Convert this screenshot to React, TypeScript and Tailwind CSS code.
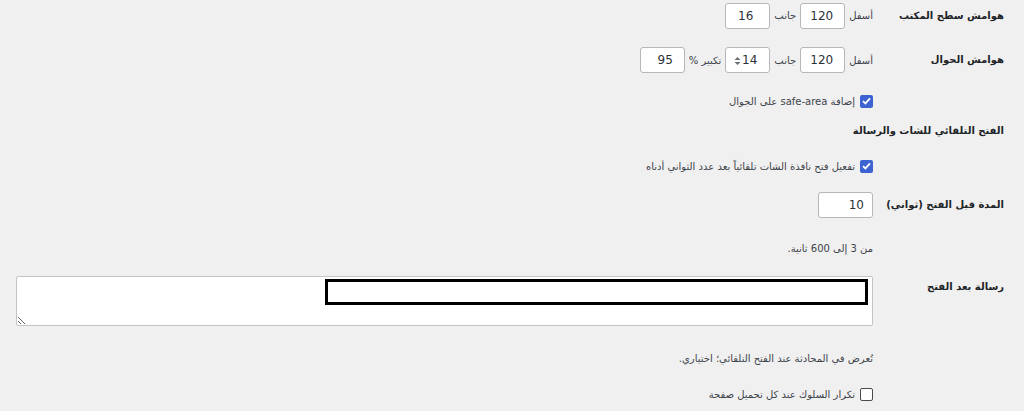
import type { ReactNode } from "react";

const fontStack = { fontFamily: '"Segoe UI", Tahoma, "DejaVu Sans", "Noto Sans", sans-serif' };

const Label = ({ children }: { children?: ReactNode }) => (
  <div className="w-[131px] shrink-0 whitespace-nowrap text-[10px] font-bold text-[#1d2327] leading-5">
    {children}
  </div>
);

const NumBox = ({
  value,
  width = "w-[45px]",
  pad = "pr-[11px]",
  spinner = false,
}: {
  value: string;
  width?: string;
  pad?: string;
  spinner?: boolean;
}) => (
  <div
    className={`relative h-[26px] ${width} ${pad} flex items-center justify-start bg-white border border-[#b5b7ba] rounded-[3px] text-[12px] text-[#2c3338]`}
  >
    <span dir="ltr">{value}</span>
    {spinner && (
      <svg className="absolute left-[8px] top-[8px]" width="7" height="10" viewBox="0 0 7 10">
        <path d="M0.5 4 L3.5 1 L6.5 4 Z" fill="#6b6e72" />
        <path d="M0.5 6 L3.5 9 L6.5 6 Z" fill="#6b6e72" />
      </svg>
    )}
  </div>
);

const Check = ({ checked, children }: { checked?: boolean; children: ReactNode }) => (
  <div className="flex items-center gap-[5px] text-[10px] text-[#3c434a] whitespace-nowrap">
    {checked ? (
      <span className="w-[13px] h-[13px] shrink-0 rounded-[2px] bg-[#3d63d3] flex items-center justify-center">
        <svg width="9" height="8" viewBox="0 0 9 8">
          <path d="M1 4.2 L3.4 6.4 L8 1.4" stroke="white" strokeWidth="1.8" fill="none" />
        </svg>
      </span>
    ) : (
      <span className="w-[13px] h-[13px] shrink-0 rounded-[2px] bg-white border border-[#4a4a4a]" />
    )}
    <span>{children}</span>
  </div>
);

// inline caption between inputs; the first one in a row sits flush to the column edge
const Word = ({ children, first = false }: { children: ReactNode; first?: boolean }) => (
  <span
    className={`text-[10px] text-[#3c434a] whitespace-nowrap ml-[4px] ${first ? "mr-0" : "mr-[4px]"}`}
  >
    {children}
  </span>
);

export default function App() {
  return (
    <div dir="rtl" style={fontStack} className="w-[1024px] h-[411px] bg-[#f0f0f0] pr-5 pl-4 overflow-hidden">
      {/* desktop margins */}
      <div className="flex items-center h-[31px]">
        <Label>هوامش سطح المكتب</Label>
        <div className="flex items-center">
          <Word first>أسفل</Word>
          <NumBox value="120" />
          <Word>جانب</Word>
          <NumBox value="16" pad="pr-[16px]" />
        </div>
      </div>

      {/* mobile margins */}
      <div className="flex items-center h-[32px] mt-[13px]">
        <Label>هوامش الحوال</Label>
        <div className="flex items-center">
          <Word first>أسفل</Word>
          <NumBox value="120" />
          <Word>جانب</Word>
          <NumBox value="14" pad="pr-[12px]" spinner />
          <Word>تكبير %</Word>
          <NumBox value="95" />
        </div>
      </div>

      <div className="flex items-center h-5 mt-[15px]">
        <Label />
        <Check checked>
          إضافة <span dir="ltr">safe-area</span> على الجوال
        </Check>
      </div>

      <div className="flex items-center h-5 mt-[10px]">
        <Label>الفتح التلقائي للشات والرسالة</Label>
      </div>

      <div className="flex items-center h-5 mt-[15px]">
        <Label />
        <Check checked>تفعيل فتح نافذة الشات تلقائياً بعد عدد الثواني أدناه</Check>
      </div>

      <div className="flex items-center h-[29px] mt-[14px]">
        <Label>المدة قبل الفتح (ثواني)</Label>
        <NumBox value="10" width="w-[55px]" pad="pr-[8px]" />
      </div>

      <div className="flex items-center h-5 mt-[19px]">
        <Label />
        <span className="text-[10px] text-[#3c434a]">من 3 إلى 600 ثانية.</span>
      </div>

      {/* message textarea */}
      <div className="flex items-start mt-[18px]">
        <div className="pt-[1px]">
          <Label>رسالة بعد الفتح</Label>
        </div>
        <div className="relative flex-1 h-[50px]">
          <textarea
            readOnly
            className="block w-full h-[50px] bg-white border border-[#c3c4c7] rounded-[2px] resize-y outline-none"
          />
          <div className="absolute right-[5px] top-[3px] w-[543px] h-[26px] border-[3px] border-black bg-white" />
        </div>
      </div>

      <div className="flex items-center h-5 mt-[22px]">
        <Label />
        <span className="text-[10px] text-[#3c434a]">تُعرض في المحادثة عند الفتح التلقائي؛ اختياري.</span>
      </div>

      <div className="flex items-center h-5 mt-[16px]">
        <Label />
        <Check>تكرار السلوك عند كل تحميل صفحة</Check>
      </div>
    </div>
  );
}
